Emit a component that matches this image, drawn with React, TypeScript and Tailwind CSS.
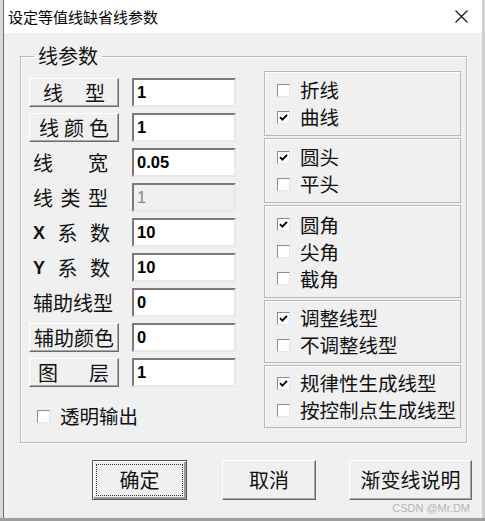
import React from 'react';

const font = { fontFamily: '"Noto Sans CJK SC", "Liberation Sans", sans-serif' };
const valFont = { fontFamily: '"Liberation Sans", Arial, sans-serif' };

function Check({ checked }: { checked?: boolean }) {
  return (
    <span className="flex h-[13px] w-[13px] shrink-0 items-center justify-center border border-t-[#8c8c8c] border-l-[#8c8c8c] border-b-[#e6e6e6] border-r-[#e6e6e6] bg-white">
      {checked && (
        <svg width="9" height="9" viewBox="0 0 9 9">
          <path d="M1 4.2 L3.4 6.6 L8 1.8" fill="none" stroke="#000" strokeWidth="1.8" />
        </svg>
      )}
    </span>
  );
}

function CheckRow({ label, checked }: { label: string; checked?: boolean }) {
  return (
    <div className="flex h-[27px] items-center gap-[10px] pl-[12px]">
      <Check checked={checked} />
      <span className="text-[19.5px] leading-none text-[#111]">{label}</span>
    </div>
  );
}

function Group({ h, children }: { h: string; children: React.ReactNode }) {
  return (
    <div className={`flex flex-col justify-center border border-[#b8b8b8] shadow-[inset_1px_1px_0_#fff] ${h}`}>
      {children}
    </div>
  );
}

function Field({ value, disabled }: { value: string; disabled?: boolean }) {
  return (
    <div
      className={`flex h-[29px] w-[104px] items-center border-2 border-t-[#7a7a7a] border-l-[#7a7a7a] border-b-[#e8e8e8] border-r-[#e8e8e8] pl-[3px] text-[16.5px] ${
        disabled ? 'bg-[#f0f0f0] font-normal text-[#8a8a8a]' : 'bg-white font-bold text-black'
      }`}
      style={valFont}>
      {value}
    </div>
  );
}

function RaisedButton({ children, className }: { children: React.ReactNode; className?: string }) {
  return (
    <div
      className={`flex h-[29px] w-[90px] items-center border border-t-white border-l-white border-b-[#6b6b6b] border-r-[#6b6b6b] bg-[#f0f0f0] shadow-[inset_-1px_-1px_0_#a8a8a8] text-[20px] leading-none text-[#111] ${className ?? ''}`}>
      {children}
    </div>
  );
}

function Row({ left, value, disabled }: { left: React.ReactNode; value: string; disabled?: boolean }) {
  return (
    <div className="flex items-center gap-[13px]">
      {left}
      <Field value={value} disabled={disabled} />
    </div>
  );
}

function Label({ children, className }: { children: React.ReactNode; className?: string }) {
  return (
    <div className={`flex h-[29px] w-[90px] items-center text-[20px] leading-none text-[#111] ${className ?? ''}`}>
      {children}
    </div>
  );
}

export default function App() {
  return (
    <div className="flex h-[521px] w-[485px] flex-col bg-[#9c9c9c]" style={font}>
      <div className="flex h-[518px] w-[485px]">
        <div className="w-[3px] bg-[#d9d9d9]" />
        <div className="flex w-[479px] flex-col border-l border-[#6e6e6e] bg-[#f0f0f0]">
          {/* title bar */}
          <div className="flex h-[33px] items-center justify-between bg-white pl-[4px] pr-[14px]">
            <span className="text-[15px] leading-none text-black">设定等值线缺省线参数</span>
            <svg width="13" height="13" viewBox="0 0 13 13">
              <path d="M0.5 0.5 L12.5 12.5 M12.5 0.5 L0.5 12.5" stroke="#111" strokeWidth="1.1" />
            </svg>
          </div>

          <div className="pt-[11px] pl-[16px]">
            <fieldset className="w-[447px] border border-[#b8b8b8] pr-[4px] pb-[14px] pl-[8px] shadow-[inset_1px_1px_0_#fff,1px_1px_0_#fff]">
              <legend className="ml-[5px] px-[4px] text-[20px] leading-[24px] text-[#111]">线参数</legend>
              <div className="flex gap-[28px] pt-[3px]">
                {/* left column */}
                <div className="flex w-[207px] flex-col pt-[7px]">
                  <div className="flex flex-col gap-[6px]">
                    <Row
                      left={
                        <RaisedButton className="justify-between px-[13px]">
                          <span>线</span>
                          <span>型</span>
                        </RaisedButton>
                      }
                      value="1"
                    />
                    <Row
                      left={
                        <RaisedButton className="justify-between px-[9px]">
                          <span>线</span>
                          <span>颜</span>
                          <span>色</span>
                        </RaisedButton>
                      }
                      value="1"
                    />
                    <Row
                      left={
                        <Label className="justify-between pl-[4px] pr-[11px]">
                          <span>线</span>
                          <span>宽</span>
                        </Label>
                      }
                      value="0.05"
                    />
                    <Row
                      left={
                        <Label className="justify-between pl-[4px] pr-[11px]">
                          <span>线</span>
                          <span>类</span>
                          <span>型</span>
                        </Label>
                      }
                      value="1"
                      disabled
                    />
                    <Row
                      left={
                        <Label className="justify-between pl-[4px] pr-[9px]">
                          <span style={valFont} className="text-[18px] font-semibold">X</span>
                          <span>系</span>
                          <span>数</span>
                        </Label>
                      }
                      value="10"
                    />
                    <Row
                      left={
                        <Label className="justify-between pl-[4px] pr-[9px]">
                          <span style={valFont} className="text-[18px] font-semibold">Y</span>
                          <span>系</span>
                          <span>数</span>
                        </Label>
                      }
                      value="10"
                    />
                    <Row left={<Label className="pl-[4px]">辅助线型</Label>} value="0" />
                    <Row
                      left={<RaisedButton className="justify-center">辅助颜色</RaisedButton>}
                      value="0"
                    />
                    <Row
                      left={
                        <RaisedButton className="justify-between pl-[8px] pr-[9px]">
                          <span>图</span>
                          <span>层</span>
                        </RaisedButton>
                      }
                      value="1"
                    />
                  </div>
                  <div className="mt-[19px] flex h-[20px] items-center gap-[10px] pl-[8px]">
                    <Check />
                    <span className="text-[19.5px] leading-none text-[#111]">透明输出</span>
                  </div>
                </div>

                {/* right column */}
                <div className="flex w-[197px] flex-col gap-[2px]">
                  <Group h="h-[65px]">
                    <CheckRow label="折线" />
                    <CheckRow label="曲线" checked />
                  </Group>
                  <Group h="h-[65px]">
                    <CheckRow label="圆头" checked />
                    <CheckRow label="平头" />
                  </Group>
                  <Group h="h-[93px]">
                    <CheckRow label="圆角" checked />
                    <CheckRow label="尖角" />
                    <CheckRow label="截角" />
                  </Group>
                  <Group h="h-[63px]">
                    <CheckRow label="调整线型" checked />
                    <CheckRow label="不调整线型" />
                  </Group>
                  <Group h="h-[63px]">
                    <CheckRow label="规律性生成线型" checked />
                    <CheckRow label="按控制点生成线型" />
                  </Group>
                </div>
              </div>
            </fieldset>
          </div>

          {/* bottom buttons */}
          <div className="mt-[17px] flex pl-[88px] text-[20px] leading-none text-[#111]">
            <div className="flex h-[40px] w-[95px] items-center justify-center border border-[#555] bg-[#f0f0f0] p-[3px] shadow-[inset_1px_1px_0_#fff,inset_-2px_-2px_0_#9a9a9a]">
              <div className="flex h-full w-full items-center justify-center border border-dotted border-[#333]">
                确定
              </div>
            </div>
            <div className="ml-[35px] flex h-[40px] w-[94px] items-center justify-center border border-t-white border-l-white border-b-[#6b6b6b] border-r-[#6b6b6b] bg-[#f0f0f0] shadow-[inset_-1px_-1px_0_#a8a8a8]">
              取消
            </div>
            <div className="ml-[33px] flex h-[40px] w-[123px] items-center justify-center border border-t-white border-l-white border-b-[#6b6b6b] border-r-[#6b6b6b] bg-[#f0f0f0] shadow-[inset_-1px_-1px_0_#a8a8a8]">
              渐变线说明
            </div>
          </div>
          <div className="mt-[3px] flex justify-end pr-[12px]">
            <span className="text-[11px] leading-none text-[#b4b4b4]" style={valFont}>
              CSDN @Mr.DM
            </span>
          </div>
        </div>
        <div className="w-[3px] bg-[#d0d0d0]" />
      </div>
    </div>
  );
}
